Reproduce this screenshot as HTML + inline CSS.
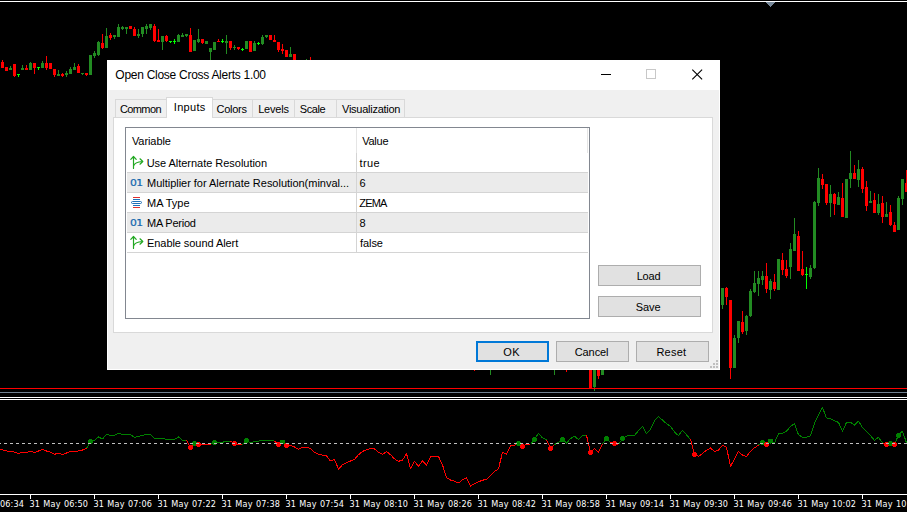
<!DOCTYPE html>
<html><head><meta charset="utf-8"><title>Open Close Cross Alerts 1.00</title>
<style>
html,body{margin:0;padding:0;background:#000;}
body{width:907px;height:512px;overflow:hidden;position:relative;font-family:"Liberation Sans", sans-serif;}
#chart{position:absolute;left:0;top:0;}
.t{position:absolute;white-space:nowrap;}
#dlg{position:absolute;left:107px;top:60px;width:613px;height:310px;background:#f0f0f0;box-shadow:inset 1px 0 0 #fff,inset -1px 0 0 #fff,inset 0 -1px 0 #fff;}
#dlg div{position:absolute;box-sizing:border-box;}
.btn{background:#e1e1e1;border:1px solid #adadad;}
.d01{left:23px;font-family:"DejaVu Sans",sans-serif;font-size:9px;line-height:12px;letter-spacing:-0.5px;color:#1467ae;-webkit-text-stroke:0.2px #1467ae;transform:scaleX(1.2);transform-origin:0 0;}
.ax{top:499px;color:#fff;font-family:"DejaVu Sans Condensed","DejaVu Sans",sans-serif;font-stretch:condensed;font-size:9px;line-height:11px;word-spacing:0.4px;letter-spacing:0.2px;}
.tab{background:#f0f0f0;border:1px solid #d9d9d9;border-bottom:none;}
</style></head><body>
<svg id="chart" width="907" height="512" viewBox="0 0 907 512">
<g shape-rendering="crispEdges">
<rect x="0" y="1" width="907" height="1" fill="#fff"/>
<polygon points="765,2 775,2 770,7" fill="#778899"/>
<rect x="2" y="60" width="1" height="8" fill="#ff0000"/><rect x="1" y="62" width="3" height="6" fill="#ff0000"/><rect x="6" y="67" width="1" height="4" fill="#ff0000"/><rect x="5" y="67" width="3" height="4" fill="#ff0000"/><rect x="10" y="66" width="1" height="4" fill="#228b22"/><rect x="9" y="68" width="3" height="2" fill="#228b22"/><rect x="14" y="64" width="1" height="13" fill="#ff0000"/><rect x="13" y="64" width="3" height="12" fill="#ff0000"/><rect x="22" y="65" width="1" height="5" fill="#228b22"/><rect x="21" y="68" width="3" height="2" fill="#228b22"/><rect x="26" y="65" width="1" height="5" fill="#ff0000"/><rect x="25" y="68" width="3" height="2" fill="#ff0000"/><rect x="30" y="62" width="1" height="8" fill="#228b22"/><rect x="29" y="63" width="3" height="7" fill="#228b22"/><rect x="34" y="63" width="1" height="11" fill="#ff0000"/><rect x="33" y="63" width="3" height="5" fill="#ff0000"/><rect x="42" y="61" width="1" height="7" fill="#228b22"/><rect x="41" y="63" width="3" height="5" fill="#228b22"/><rect x="46" y="56" width="1" height="14" fill="#ff0000"/><rect x="45" y="63" width="3" height="5" fill="#ff0000"/><rect x="50" y="63" width="1" height="6" fill="#ff0000"/><rect x="49" y="63" width="3" height="6" fill="#ff0000"/><rect x="54" y="69" width="1" height="8" fill="#ff0000"/><rect x="53" y="69" width="3" height="6" fill="#ff0000"/><rect x="58" y="70" width="1" height="6" fill="#228b22"/><rect x="57" y="74" width="3" height="2" fill="#228b22"/><rect x="62" y="73" width="1" height="4" fill="#ff0000"/><rect x="61" y="74" width="3" height="2" fill="#ff0000"/><rect x="66" y="71" width="1" height="6" fill="#228b22"/><rect x="65" y="73" width="3" height="2" fill="#228b22"/><rect x="70" y="67" width="1" height="7" fill="#228b22"/><rect x="69" y="69" width="3" height="5" fill="#228b22"/><rect x="74" y="63" width="1" height="7" fill="#228b22"/><rect x="73" y="67" width="3" height="3" fill="#228b22"/><rect x="78" y="64" width="1" height="9" fill="#ff0000"/><rect x="77" y="66" width="3" height="7" fill="#ff0000"/><rect x="86" y="73" width="1" height="3" fill="#ff0000"/><rect x="85" y="73" width="3" height="2" fill="#ff0000"/><rect x="90" y="55" width="1" height="20" fill="#228b22"/><rect x="89" y="55" width="3" height="20" fill="#228b22"/><rect x="94" y="51" width="1" height="7" fill="#228b22"/><rect x="93" y="53" width="3" height="3" fill="#228b22"/><rect x="98" y="41" width="1" height="15" fill="#228b22"/><rect x="97" y="42" width="3" height="13" fill="#228b22"/><rect x="102" y="34" width="1" height="15" fill="#ff0000"/><rect x="101" y="43" width="3" height="5" fill="#ff0000"/><rect x="106" y="28" width="1" height="20" fill="#228b22"/><rect x="105" y="36" width="3" height="12" fill="#228b22"/><rect x="110" y="33" width="1" height="7" fill="#ff0000"/><rect x="109" y="35" width="3" height="3" fill="#ff0000"/><rect x="114" y="35" width="1" height="4" fill="#228b22"/><rect x="113" y="35" width="3" height="2" fill="#228b22"/><rect x="118" y="24" width="1" height="13" fill="#228b22"/><rect x="117" y="27" width="3" height="10" fill="#228b22"/><rect x="122" y="26" width="1" height="4" fill="#228b22"/><rect x="121" y="27" width="3" height="2" fill="#228b22"/><rect x="126" y="27" width="1" height="7" fill="#228b22"/><rect x="125" y="27" width="3" height="2" fill="#228b22"/><rect x="130" y="26" width="1" height="3" fill="#ff0000"/><rect x="129" y="26" width="3" height="3" fill="#ff0000"/><rect x="134" y="27" width="1" height="9" fill="#ff0000"/><rect x="133" y="29" width="3" height="7" fill="#ff0000"/><rect x="138" y="29" width="1" height="9" fill="#228b22"/><rect x="137" y="34" width="3" height="2" fill="#228b22"/><rect x="142" y="27" width="1" height="10" fill="#228b22"/><rect x="141" y="27" width="3" height="7" fill="#228b22"/><rect x="146" y="24" width="1" height="10" fill="#228b22"/><rect x="145" y="26" width="3" height="3" fill="#228b22"/><rect x="150" y="24" width="1" height="6" fill="#228b22"/><rect x="149" y="24" width="3" height="4" fill="#228b22"/><rect x="154" y="24" width="1" height="18" fill="#ff0000"/><rect x="153" y="26" width="3" height="15" fill="#ff0000"/><rect x="158" y="29" width="1" height="13" fill="#ff0000"/><rect x="157" y="40" width="3" height="2" fill="#ff0000"/><rect x="162" y="36" width="1" height="14" fill="#228b22"/><rect x="161" y="36" width="3" height="6" fill="#228b22"/><rect x="166" y="35" width="1" height="7" fill="#ff0000"/><rect x="165" y="36" width="3" height="5" fill="#ff0000"/><rect x="178" y="34" width="1" height="8" fill="#228b22"/><rect x="177" y="35" width="3" height="7" fill="#228b22"/><rect x="182" y="33" width="1" height="4" fill="#228b22"/><rect x="181" y="35" width="3" height="2" fill="#228b22"/><rect x="186" y="34" width="1" height="3" fill="#228b22"/><rect x="185" y="34" width="3" height="2" fill="#228b22"/><rect x="190" y="28" width="1" height="24" fill="#ff0000"/><rect x="189" y="35" width="3" height="17" fill="#ff0000"/><rect x="194" y="40" width="1" height="11" fill="#228b22"/><rect x="193" y="40" width="3" height="11" fill="#228b22"/><rect x="198" y="29" width="1" height="14" fill="#228b22"/><rect x="197" y="39" width="3" height="3" fill="#228b22"/><rect x="202" y="39" width="1" height="5" fill="#ff0000"/><rect x="201" y="39" width="3" height="4" fill="#ff0000"/><rect x="206" y="41" width="1" height="3" fill="#228b22"/><rect x="205" y="41" width="3" height="3" fill="#228b22"/><rect x="210" y="48" width="1" height="12" fill="#228b22"/><rect x="209" y="48" width="3" height="4" fill="#228b22"/><rect x="214" y="42" width="1" height="8" fill="#228b22"/><rect x="213" y="42" width="3" height="8" fill="#228b22"/><rect x="226" y="35" width="1" height="19" fill="#228b22"/><rect x="225" y="41" width="3" height="2" fill="#228b22"/><rect x="230" y="41" width="1" height="9" fill="#ff0000"/><rect x="229" y="41" width="3" height="7" fill="#ff0000"/><rect x="238" y="47" width="1" height="3" fill="#ff0000"/><rect x="237" y="47" width="3" height="2" fill="#ff0000"/><rect x="246" y="41" width="1" height="8" fill="#228b22"/><rect x="245" y="41" width="3" height="8" fill="#228b22"/><rect x="250" y="41" width="1" height="11" fill="#ff0000"/><rect x="249" y="41" width="3" height="11" fill="#ff0000"/><rect x="254" y="41" width="1" height="10" fill="#228b22"/><rect x="253" y="43" width="3" height="8" fill="#228b22"/><rect x="262" y="35" width="1" height="10" fill="#228b22"/><rect x="261" y="37" width="3" height="7" fill="#228b22"/><rect x="266" y="35" width="1" height="3" fill="#228b22"/><rect x="265" y="35" width="3" height="2" fill="#228b22"/><rect x="270" y="35" width="1" height="5" fill="#ff0000"/><rect x="269" y="35" width="3" height="5" fill="#ff0000"/><rect x="274" y="35" width="1" height="7" fill="#ff0000"/><rect x="273" y="40" width="3" height="2" fill="#ff0000"/><rect x="278" y="42" width="1" height="10" fill="#ff0000"/><rect x="277" y="42" width="3" height="8" fill="#ff0000"/><rect x="282" y="44" width="1" height="10" fill="#ff0000"/><rect x="281" y="49" width="3" height="2" fill="#ff0000"/><rect x="286" y="50" width="1" height="7" fill="#ff0000"/><rect x="285" y="50" width="3" height="7" fill="#ff0000"/><rect x="290" y="47" width="1" height="10" fill="#228b22"/><rect x="289" y="54" width="3" height="3" fill="#228b22"/><rect x="294" y="54" width="1" height="9" fill="#ff0000"/><rect x="293" y="54" width="3" height="9" fill="#ff0000"/><rect x="306" y="59" width="1" height="4" fill="#228b22"/><rect x="305" y="61" width="3" height="2" fill="#228b22"/><rect x="310" y="57" width="1" height="6" fill="#ff0000"/><rect x="309" y="61" width="3" height="2" fill="#ff0000"/><rect x="474" y="366" width="1" height="5" fill="#ff0000"/><rect x="473" y="366" width="3" height="1" fill="#ff0000"/><rect x="490" y="366" width="1" height="9" fill="#228b22"/><rect x="489" y="366" width="3" height="1" fill="#228b22"/><rect x="554" y="366" width="1" height="9" fill="#228b22"/><rect x="553" y="366" width="3" height="1" fill="#228b22"/><rect x="566" y="366" width="1" height="6" fill="#ff0000"/><rect x="565" y="366" width="3" height="1" fill="#ff0000"/><rect x="590" y="360" width="1" height="29" fill="#ff0000"/><rect x="589" y="360" width="3" height="29" fill="#ff0000"/><rect x="594" y="360" width="1" height="31" fill="#228b22"/><rect x="593" y="360" width="3" height="27" fill="#228b22"/><rect x="598" y="360" width="1" height="19" fill="#ff0000"/><rect x="597" y="360" width="3" height="16" fill="#ff0000"/><rect x="602" y="360" width="1" height="15" fill="#228b22"/><rect x="601" y="360" width="3" height="15" fill="#228b22"/><rect x="722" y="288" width="1" height="21" fill="#228b22"/><rect x="721" y="288" width="3" height="17" fill="#228b22"/><rect x="726" y="287" width="1" height="18" fill="#ff0000"/><rect x="725" y="288" width="3" height="9" fill="#ff0000"/><rect x="730" y="300" width="1" height="79" fill="#ff0000"/><rect x="729" y="300" width="3" height="68" fill="#ff0000"/><rect x="734" y="335" width="1" height="33" fill="#228b22"/><rect x="733" y="338" width="3" height="30" fill="#228b22"/><rect x="738" y="321" width="1" height="22" fill="#228b22"/><rect x="737" y="321" width="3" height="17" fill="#228b22"/><rect x="742" y="311" width="1" height="23" fill="#ff0000"/><rect x="741" y="322" width="3" height="10" fill="#ff0000"/><rect x="746" y="315" width="1" height="20" fill="#228b22"/><rect x="745" y="316" width="3" height="15" fill="#228b22"/><rect x="750" y="289" width="1" height="28" fill="#228b22"/><rect x="749" y="291" width="3" height="25" fill="#228b22"/><rect x="754" y="271" width="1" height="22" fill="#228b22"/><rect x="753" y="283" width="3" height="9" fill="#228b22"/><rect x="758" y="271" width="1" height="25" fill="#228b22"/><rect x="757" y="278" width="3" height="6" fill="#228b22"/><rect x="762" y="271" width="1" height="14" fill="#228b22"/><rect x="761" y="276" width="3" height="4" fill="#228b22"/><rect x="766" y="263" width="1" height="30" fill="#ff0000"/><rect x="765" y="276" width="3" height="13" fill="#ff0000"/><rect x="770" y="279" width="1" height="20" fill="#228b22"/><rect x="769" y="281" width="3" height="9" fill="#228b22"/><rect x="774" y="274" width="1" height="17" fill="#ff0000"/><rect x="773" y="282" width="3" height="7" fill="#ff0000"/><rect x="778" y="259" width="1" height="31" fill="#228b22"/><rect x="777" y="259" width="3" height="31" fill="#228b22"/><rect x="782" y="253" width="1" height="22" fill="#ff0000"/><rect x="781" y="260" width="3" height="10" fill="#ff0000"/><rect x="786" y="260" width="1" height="18" fill="#ff0000"/><rect x="785" y="269" width="3" height="7" fill="#ff0000"/><rect x="790" y="243" width="1" height="36" fill="#228b22"/><rect x="789" y="249" width="3" height="18" fill="#228b22"/><rect x="794" y="218" width="1" height="33" fill="#228b22"/><rect x="793" y="234" width="3" height="17" fill="#228b22"/><rect x="798" y="231" width="1" height="40" fill="#ff0000"/><rect x="797" y="236" width="3" height="35" fill="#ff0000"/><rect x="802" y="251" width="1" height="25" fill="#ff0000"/><rect x="801" y="269" width="3" height="6" fill="#ff0000"/><rect x="810" y="265" width="1" height="14" fill="#228b22"/><rect x="809" y="268" width="3" height="9" fill="#228b22"/><rect x="814" y="201" width="1" height="68" fill="#228b22"/><rect x="813" y="202" width="3" height="66" fill="#228b22"/><rect x="818" y="168" width="1" height="38" fill="#228b22"/><rect x="817" y="178" width="3" height="25" fill="#228b22"/><rect x="822" y="174" width="1" height="15" fill="#ff0000"/><rect x="821" y="179" width="3" height="6" fill="#ff0000"/><rect x="826" y="184" width="1" height="21" fill="#ff0000"/><rect x="825" y="184" width="3" height="19" fill="#ff0000"/><rect x="830" y="185" width="1" height="32" fill="#228b22"/><rect x="829" y="194" width="3" height="9" fill="#228b22"/><rect x="834" y="193" width="1" height="22" fill="#ff0000"/><rect x="833" y="194" width="3" height="10" fill="#ff0000"/><rect x="838" y="192" width="1" height="13" fill="#228b22"/><rect x="837" y="197" width="3" height="8" fill="#228b22"/><rect x="842" y="183" width="1" height="34" fill="#ff0000"/><rect x="841" y="198" width="3" height="19" fill="#ff0000"/><rect x="846" y="179" width="1" height="39" fill="#228b22"/><rect x="845" y="179" width="3" height="39" fill="#228b22"/><rect x="850" y="151" width="1" height="37" fill="#228b22"/><rect x="849" y="173" width="3" height="6" fill="#228b22"/><rect x="854" y="165" width="1" height="14" fill="#ff0000"/><rect x="853" y="173" width="3" height="6" fill="#ff0000"/><rect x="858" y="160" width="1" height="27" fill="#228b22"/><rect x="857" y="169" width="3" height="11" fill="#228b22"/><rect x="862" y="167" width="1" height="26" fill="#ff0000"/><rect x="861" y="169" width="3" height="20" fill="#ff0000"/><rect x="866" y="181" width="1" height="30" fill="#ff0000"/><rect x="865" y="187" width="3" height="19" fill="#ff0000"/><rect x="870" y="191" width="1" height="12" fill="#228b22"/><rect x="869" y="201" width="3" height="2" fill="#228b22"/><rect x="874" y="193" width="1" height="20" fill="#ff0000"/><rect x="873" y="200" width="3" height="13" fill="#ff0000"/><rect x="878" y="194" width="1" height="21" fill="#228b22"/><rect x="877" y="204" width="3" height="9" fill="#228b22"/><rect x="882" y="196" width="1" height="27" fill="#ff0000"/><rect x="881" y="203" width="3" height="14" fill="#ff0000"/><rect x="886" y="202" width="1" height="15" fill="#228b22"/><rect x="885" y="214" width="3" height="3" fill="#228b22"/><rect x="890" y="205" width="1" height="21" fill="#ff0000"/><rect x="889" y="212" width="3" height="13" fill="#ff0000"/><rect x="894" y="222" width="1" height="10" fill="#ff0000"/><rect x="893" y="225" width="3" height="7" fill="#ff0000"/><rect x="898" y="196" width="1" height="34" fill="#228b22"/><rect x="897" y="198" width="3" height="32" fill="#228b22"/><rect x="902" y="179" width="1" height="26" fill="#228b22"/><rect x="901" y="179" width="3" height="20" fill="#228b22"/><rect x="906" y="170" width="1" height="22" fill="#ff0000"/><rect x="905" y="183" width="3" height="9" fill="#ff0000"/><rect x="18" y="74" width="1" height="3" fill="#00ff00"/><rect x="17" y="74" width="3" height="1" fill="#00ff00"/><rect x="38" y="67" width="1" height="3" fill="#00ff00"/><rect x="37" y="67" width="3" height="1" fill="#00ff00"/><rect x="82" y="73" width="1" height="2" fill="#228b22"/><rect x="81" y="73" width="3" height="1" fill="#228b22"/><rect x="170" y="41" width="1" height="2" fill="#00ff00"/><rect x="169" y="41" width="3" height="1" fill="#00ff00"/><rect x="174" y="39" width="1" height="5" fill="#00ff00"/><rect x="173" y="41" width="3" height="1" fill="#00ff00"/><rect x="218" y="39" width="1" height="3" fill="#ff0000"/><rect x="217" y="41" width="3" height="1" fill="#ff0000"/><rect x="222" y="39" width="1" height="4" fill="#00ff00"/><rect x="221" y="41" width="3" height="1" fill="#00ff00"/><rect x="234" y="45" width="1" height="5" fill="#228b22"/><rect x="233" y="47" width="3" height="1" fill="#228b22"/><rect x="242" y="48" width="1" height="3" fill="#00ff00"/><rect x="241" y="49" width="3" height="1" fill="#00ff00"/><rect x="258" y="42" width="1" height="3" fill="#00ff00"/><rect x="257" y="43" width="3" height="1" fill="#00ff00"/><rect x="806" y="267" width="1" height="22" fill="#00ff00"/><rect x="805" y="274" width="3" height="1" fill="#00ff00"/>
<rect x="0" y="388" width="907" height="1" fill="#ff0000"/>
<rect x="0" y="392" width="907" height="1" fill="#708090"/>
<rect x="0" y="397" width="907" height="1" fill="#fff"/>
<rect x="0" y="399" width="907" height="1" fill="#fff"/>
<rect x="0" y="494" width="907" height="1" fill="#fff"/>
<rect x="30" y="494" width="1" height="5" fill="#fff"/><rect x="94" y="494" width="1" height="5" fill="#fff"/><rect x="158" y="494" width="1" height="5" fill="#fff"/><rect x="222" y="494" width="1" height="5" fill="#fff"/><rect x="286" y="494" width="1" height="5" fill="#fff"/><rect x="350" y="494" width="1" height="5" fill="#fff"/><rect x="414" y="494" width="1" height="5" fill="#fff"/><rect x="478" y="494" width="1" height="5" fill="#fff"/><rect x="542" y="494" width="1" height="5" fill="#fff"/><rect x="606" y="494" width="1" height="5" fill="#fff"/><rect x="670" y="494" width="1" height="5" fill="#fff"/><rect x="734" y="494" width="1" height="5" fill="#fff"/><rect x="798" y="494" width="1" height="5" fill="#fff"/><rect x="862" y="494" width="1" height="5" fill="#fff"/>
</g>
<g stroke-linejoin="round" shape-rendering="crispEdges">
<polyline points="-1.5,449.5 2.5,449.8 6.5,451.0 10.5,451.0 14.5,452.2 18.5,453.4 22.5,452.4 26.5,452.4 30.5,451.4 34.5,452.4 38.5,451.0 42.5,449.4 46.5,451.0 50.5,452.2 54.5,454.2 58.5,453.4 62.5,454.4 66.5,453.0 70.5,451.4 74.5,451.4 78.5,451.0 82.5,450.0 86.5,448.4" fill="none" stroke="#ff0000" stroke-width="1"/><polyline points="86.5,448.4 90.5,441.2 94.5,440.2 98.5,437.0 102.5,439.0 106.5,434.5 110.5,435.4 114.5,435.2 118.5,433.2 122.5,434.4 126.5,434.4 130.5,434.4 134.5,437.4 138.5,436.2 142.5,435.5 146.5,434.4 150.5,434.4 154.5,438.2 158.5,438.2 162.5,438.2 166.5,439.3 170.5,439.3 174.5,439.3 178.5,437.0 182.5,440.2 186.5,440.3" fill="none" stroke="#008000" stroke-width="1"/><polyline points="186.5,440.3 190.5,447.3 194.5,443.2 198.5,444.8 202.5,444.5 206.5,444.5 210.5,444.3" fill="none" stroke="#ff0000" stroke-width="1"/><polyline points="210.5,444.3 214.5,442.3 218.5,443.0 222.5,442.3 226.5,441.2 230.5,441.0" fill="none" stroke="#008000" stroke-width="1"/><polyline points="230.5,441.0 234.5,443.2 238.5,444.5 242.5,444.5" fill="none" stroke="#ff0000" stroke-width="1"/><polyline points="242.5,444.5 246.5,440.7 250.5,442.7 254.5,441.5 258.5,441.2 262.5,440.3 266.5,440.3 270.5,440.3 274.5,441.2" fill="none" stroke="#008000" stroke-width="1"/><polyline points="274.5,441.2 278.5,444.5" fill="none" stroke="#ff0000" stroke-width="1"/><polyline points="278.5,444.5 282.5,442.0" fill="none" stroke="#008000" stroke-width="1"/><polyline points="282.5,442.0 286.5,445.6 290.5,445.6 294.5,447.0 298.5,449.4 302.5,447.3 306.5,447.3 310.5,448.4 314.5,452.2 318.5,454.2 322.5,455.2 326.5,455.9 330.5,461.0 334.5,459.4 338.5,469.1 342.5,464.7 346.5,462.7 350.5,461.0 354.5,459.4 358.5,454.7 362.5,451.4 366.5,449.8 370.5,448.6 374.5,449.0 378.5,452.2 382.5,454.4 386.5,451.4 390.5,454.7 394.5,458.9 398.5,461.3 402.5,460.2 406.5,453.6 410.5,468.5 414.5,461.3 418.5,466.3 422.5,461.0 426.5,465.0 430.5,457.0 434.5,456.1 438.5,456.5 442.5,464.8 446.5,477.7 450.5,480.0 454.5,481.3 458.5,483.0 462.5,479.7 466.5,478.0 470.5,486.0 474.5,483.8 478.5,481.8 482.5,480.2 486.5,479.4 490.5,475.5 494.5,471.4 498.5,468.9 502.5,452.3 506.5,454.0 510.5,445.7 514.5,445.2 518.5,443.5 522.5,446.5 526.5,444.0 530.5,444.5" fill="none" stroke="#ff0000" stroke-width="1"/><polyline points="530.5,444.5 534.5,439.5 538.5,433.2 542.5,437.9 546.5,439.9" fill="none" stroke="#008000" stroke-width="1"/><polyline points="546.5,439.9 550.5,448.2 554.5,444.5" fill="none" stroke="#ff0000" stroke-width="1"/><polyline points="554.5,444.5 558.5,442.4 562.5,439.5 566.5,443.0 570.5,438.7 574.5,436.2 578.5,439.5 582.5,435.3 586.5,435.3" fill="none" stroke="#008000" stroke-width="1"/><polyline points="586.5,435.3 590.5,452.6 594.5,448.6 598.5,452.3 602.5,444.0" fill="none" stroke="#ff0000" stroke-width="1"/><polyline points="602.5,444.0 606.5,438.7 610.5,442.3" fill="none" stroke="#008000" stroke-width="1"/><polyline points="610.5,442.3 614.5,443.5 618.5,444.5" fill="none" stroke="#ff0000" stroke-width="1"/><polyline points="618.5,444.5 622.5,438.5 626.5,436.2 630.5,435.3 634.5,435.3 638.5,430.7 642.5,426.2 646.5,433.7 650.5,429.5 654.5,420.7 658.5,416.3 662.5,420.2 666.5,423.7 670.5,426.5 674.5,432.0 678.5,435.7 682.5,430.2 686.5,434.8 690.5,439.5" fill="none" stroke="#008000" stroke-width="1"/><polyline points="690.5,439.5 694.5,454.4 698.5,456.4 702.5,453.5 706.5,450.2 710.5,448.0 714.5,451.4 718.5,450.1 722.5,445.1 726.5,447.3 730.5,466.4 734.5,458.9 738.5,451.4 742.5,455.1 746.5,456.4 750.5,451.4 754.5,447.8 758.5,445.1" fill="none" stroke="#ff0000" stroke-width="1"/><polyline points="758.5,445.1 762.5,442.3" fill="none" stroke="#008000" stroke-width="1"/><polyline points="762.5,442.3 766.5,444.5" fill="none" stroke="#ff0000" stroke-width="1"/><polyline points="766.5,444.5 770.5,441.1 774.5,442.8 778.5,433.7 782.5,433.2 786.5,431.2 790.5,426.5 794.5,423.6 798.5,434.8 802.5,437.3 806.5,437.3 810.5,435.7 814.5,423.2 818.5,414.9 822.5,407.5 826.5,417.9 830.5,418.6 834.5,420.9 838.5,422.4 842.5,431.2 846.5,422.5 850.5,422.4 854.5,425.2 858.5,421.2 862.5,427.4 866.5,431.5 870.5,435.7 874.5,440.3 878.5,437.3 882.5,442.9" fill="none" stroke="#008000" stroke-width="1"/><polyline points="882.5,442.9 886.5,444.3 890.5,443.5 894.5,444.3" fill="none" stroke="#ff0000" stroke-width="1"/><polyline points="894.5,444.3 898.5,435.2 902.5,431.2 906.5,442.9 910.5,443.0" fill="none" stroke="#008000" stroke-width="1"/><circle cx="90.5" cy="441.2" r="2.5" fill="#008000"/><circle cx="190.5" cy="447.3" r="2.5" fill="#ff0000"/><circle cx="194.5" cy="443.2" r="2.5" fill="#008000"/><circle cx="198.5" cy="444.8" r="2.5" fill="#ff0000"/><circle cx="214.5" cy="442.3" r="2.5" fill="#008000"/><circle cx="234.5" cy="443.2" r="2.5" fill="#ff0000"/><circle cx="246.5" cy="440.7" r="2.5" fill="#008000"/><circle cx="278.5" cy="444.5" r="2.5" fill="#ff0000"/><circle cx="282.5" cy="442.0" r="2.5" fill="#008000"/><circle cx="286.5" cy="445.6" r="2.5" fill="#ff0000"/><circle cx="518.5" cy="443.5" r="2.5" fill="#008000"/><circle cx="522.5" cy="446.5" r="2.5" fill="#ff0000"/><circle cx="534.5" cy="439.5" r="2.5" fill="#008000"/><circle cx="550.5" cy="448.2" r="2.5" fill="#ff0000"/><circle cx="562.5" cy="439.5" r="2.5" fill="#008000"/><circle cx="590.5" cy="452.6" r="2.5" fill="#ff0000"/><circle cx="606.5" cy="438.7" r="2.5" fill="#008000"/><circle cx="614.5" cy="443.5" r="2.5" fill="#ff0000"/><circle cx="622.5" cy="438.5" r="2.5" fill="#008000"/><circle cx="694.5" cy="454.4" r="2.5" fill="#ff0000"/><circle cx="762.5" cy="442.3" r="2.5" fill="#008000"/><circle cx="766.5" cy="444.5" r="2.5" fill="#ff0000"/><circle cx="770.5" cy="441.1" r="2.5" fill="#008000"/><circle cx="886.5" cy="444.3" r="2.5" fill="#ff0000"/><circle cx="890.5" cy="443.5" r="2.5" fill="#008000"/><circle cx="894.5" cy="444.3" r="2.5" fill="#ff0000"/><circle cx="898.5" cy="435.2" r="2.5" fill="#008000"/>
</g>
<g shape-rendering="crispEdges"><rect x="-2" y="443" width="3" height="1" fill="#c0c0c0"/><rect x="4" y="443" width="3" height="1" fill="#c0c0c0"/><rect x="10" y="443" width="3" height="1" fill="#c0c0c0"/><rect x="16" y="443" width="3" height="1" fill="#c0c0c0"/><rect x="22" y="443" width="3" height="1" fill="#c0c0c0"/><rect x="28" y="443" width="3" height="1" fill="#c0c0c0"/><rect x="34" y="443" width="3" height="1" fill="#c0c0c0"/><rect x="40" y="443" width="3" height="1" fill="#c0c0c0"/><rect x="46" y="443" width="3" height="1" fill="#c0c0c0"/><rect x="52" y="443" width="3" height="1" fill="#c0c0c0"/><rect x="58" y="443" width="3" height="1" fill="#c0c0c0"/><rect x="64" y="443" width="3" height="1" fill="#c0c0c0"/><rect x="70" y="443" width="3" height="1" fill="#c0c0c0"/><rect x="76" y="443" width="3" height="1" fill="#c0c0c0"/><rect x="82" y="443" width="3" height="1" fill="#c0c0c0"/><rect x="88" y="443" width="3" height="1" fill="#c0c0c0"/><rect x="94" y="443" width="3" height="1" fill="#c0c0c0"/><rect x="100" y="443" width="3" height="1" fill="#c0c0c0"/><rect x="106" y="443" width="3" height="1" fill="#c0c0c0"/><rect x="112" y="443" width="3" height="1" fill="#c0c0c0"/><rect x="118" y="443" width="3" height="1" fill="#c0c0c0"/><rect x="124" y="443" width="3" height="1" fill="#c0c0c0"/><rect x="130" y="443" width="3" height="1" fill="#c0c0c0"/><rect x="136" y="443" width="3" height="1" fill="#c0c0c0"/><rect x="142" y="443" width="3" height="1" fill="#c0c0c0"/><rect x="148" y="443" width="3" height="1" fill="#c0c0c0"/><rect x="154" y="443" width="3" height="1" fill="#c0c0c0"/><rect x="160" y="443" width="3" height="1" fill="#c0c0c0"/><rect x="166" y="443" width="3" height="1" fill="#c0c0c0"/><rect x="172" y="443" width="3" height="1" fill="#c0c0c0"/><rect x="178" y="443" width="3" height="1" fill="#c0c0c0"/><rect x="184" y="443" width="3" height="1" fill="#c0c0c0"/><rect x="190" y="443" width="3" height="1" fill="#c0c0c0"/><rect x="196" y="443" width="3" height="1" fill="#c0c0c0"/><rect x="202" y="443" width="3" height="1" fill="#c0c0c0"/><rect x="208" y="443" width="3" height="1" fill="#c0c0c0"/><rect x="214" y="443" width="3" height="1" fill="#c0c0c0"/><rect x="220" y="443" width="3" height="1" fill="#c0c0c0"/><rect x="226" y="443" width="3" height="1" fill="#c0c0c0"/><rect x="232" y="443" width="3" height="1" fill="#c0c0c0"/><rect x="238" y="443" width="3" height="1" fill="#c0c0c0"/><rect x="244" y="443" width="3" height="1" fill="#c0c0c0"/><rect x="250" y="443" width="3" height="1" fill="#c0c0c0"/><rect x="256" y="443" width="3" height="1" fill="#c0c0c0"/><rect x="262" y="443" width="3" height="1" fill="#c0c0c0"/><rect x="268" y="443" width="3" height="1" fill="#c0c0c0"/><rect x="274" y="443" width="3" height="1" fill="#c0c0c0"/><rect x="280" y="443" width="3" height="1" fill="#c0c0c0"/><rect x="286" y="443" width="3" height="1" fill="#c0c0c0"/><rect x="292" y="443" width="3" height="1" fill="#c0c0c0"/><rect x="298" y="443" width="3" height="1" fill="#c0c0c0"/><rect x="304" y="443" width="3" height="1" fill="#c0c0c0"/><rect x="310" y="443" width="3" height="1" fill="#c0c0c0"/><rect x="316" y="443" width="3" height="1" fill="#c0c0c0"/><rect x="322" y="443" width="3" height="1" fill="#c0c0c0"/><rect x="328" y="443" width="3" height="1" fill="#c0c0c0"/><rect x="334" y="443" width="3" height="1" fill="#c0c0c0"/><rect x="340" y="443" width="3" height="1" fill="#c0c0c0"/><rect x="346" y="443" width="3" height="1" fill="#c0c0c0"/><rect x="352" y="443" width="3" height="1" fill="#c0c0c0"/><rect x="358" y="443" width="3" height="1" fill="#c0c0c0"/><rect x="364" y="443" width="3" height="1" fill="#c0c0c0"/><rect x="370" y="443" width="3" height="1" fill="#c0c0c0"/><rect x="376" y="443" width="3" height="1" fill="#c0c0c0"/><rect x="382" y="443" width="3" height="1" fill="#c0c0c0"/><rect x="388" y="443" width="3" height="1" fill="#c0c0c0"/><rect x="394" y="443" width="3" height="1" fill="#c0c0c0"/><rect x="400" y="443" width="3" height="1" fill="#c0c0c0"/><rect x="406" y="443" width="3" height="1" fill="#c0c0c0"/><rect x="412" y="443" width="3" height="1" fill="#c0c0c0"/><rect x="418" y="443" width="3" height="1" fill="#c0c0c0"/><rect x="424" y="443" width="3" height="1" fill="#c0c0c0"/><rect x="430" y="443" width="3" height="1" fill="#c0c0c0"/><rect x="436" y="443" width="3" height="1" fill="#c0c0c0"/><rect x="442" y="443" width="3" height="1" fill="#c0c0c0"/><rect x="448" y="443" width="3" height="1" fill="#c0c0c0"/><rect x="454" y="443" width="3" height="1" fill="#c0c0c0"/><rect x="460" y="443" width="3" height="1" fill="#c0c0c0"/><rect x="466" y="443" width="3" height="1" fill="#c0c0c0"/><rect x="472" y="443" width="3" height="1" fill="#c0c0c0"/><rect x="478" y="443" width="3" height="1" fill="#c0c0c0"/><rect x="484" y="443" width="3" height="1" fill="#c0c0c0"/><rect x="490" y="443" width="3" height="1" fill="#c0c0c0"/><rect x="496" y="443" width="3" height="1" fill="#c0c0c0"/><rect x="502" y="443" width="3" height="1" fill="#c0c0c0"/><rect x="508" y="443" width="3" height="1" fill="#c0c0c0"/><rect x="514" y="443" width="3" height="1" fill="#c0c0c0"/><rect x="520" y="443" width="3" height="1" fill="#c0c0c0"/><rect x="526" y="443" width="3" height="1" fill="#c0c0c0"/><rect x="532" y="443" width="3" height="1" fill="#c0c0c0"/><rect x="538" y="443" width="3" height="1" fill="#c0c0c0"/><rect x="544" y="443" width="3" height="1" fill="#c0c0c0"/><rect x="550" y="443" width="3" height="1" fill="#c0c0c0"/><rect x="556" y="443" width="3" height="1" fill="#c0c0c0"/><rect x="562" y="443" width="3" height="1" fill="#c0c0c0"/><rect x="568" y="443" width="3" height="1" fill="#c0c0c0"/><rect x="574" y="443" width="3" height="1" fill="#c0c0c0"/><rect x="580" y="443" width="3" height="1" fill="#c0c0c0"/><rect x="586" y="443" width="3" height="1" fill="#c0c0c0"/><rect x="592" y="443" width="3" height="1" fill="#c0c0c0"/><rect x="598" y="443" width="3" height="1" fill="#c0c0c0"/><rect x="604" y="443" width="3" height="1" fill="#c0c0c0"/><rect x="610" y="443" width="3" height="1" fill="#c0c0c0"/><rect x="616" y="443" width="3" height="1" fill="#c0c0c0"/><rect x="622" y="443" width="3" height="1" fill="#c0c0c0"/><rect x="628" y="443" width="3" height="1" fill="#c0c0c0"/><rect x="634" y="443" width="3" height="1" fill="#c0c0c0"/><rect x="640" y="443" width="3" height="1" fill="#c0c0c0"/><rect x="646" y="443" width="3" height="1" fill="#c0c0c0"/><rect x="652" y="443" width="3" height="1" fill="#c0c0c0"/><rect x="658" y="443" width="3" height="1" fill="#c0c0c0"/><rect x="664" y="443" width="3" height="1" fill="#c0c0c0"/><rect x="670" y="443" width="3" height="1" fill="#c0c0c0"/><rect x="676" y="443" width="3" height="1" fill="#c0c0c0"/><rect x="682" y="443" width="3" height="1" fill="#c0c0c0"/><rect x="688" y="443" width="3" height="1" fill="#c0c0c0"/><rect x="694" y="443" width="3" height="1" fill="#c0c0c0"/><rect x="700" y="443" width="3" height="1" fill="#c0c0c0"/><rect x="706" y="443" width="3" height="1" fill="#c0c0c0"/><rect x="712" y="443" width="3" height="1" fill="#c0c0c0"/><rect x="718" y="443" width="3" height="1" fill="#c0c0c0"/><rect x="724" y="443" width="3" height="1" fill="#c0c0c0"/><rect x="730" y="443" width="3" height="1" fill="#c0c0c0"/><rect x="736" y="443" width="3" height="1" fill="#c0c0c0"/><rect x="742" y="443" width="3" height="1" fill="#c0c0c0"/><rect x="748" y="443" width="3" height="1" fill="#c0c0c0"/><rect x="754" y="443" width="3" height="1" fill="#c0c0c0"/><rect x="760" y="443" width="3" height="1" fill="#c0c0c0"/><rect x="766" y="443" width="3" height="1" fill="#c0c0c0"/><rect x="772" y="443" width="3" height="1" fill="#c0c0c0"/><rect x="778" y="443" width="3" height="1" fill="#c0c0c0"/><rect x="784" y="443" width="3" height="1" fill="#c0c0c0"/><rect x="790" y="443" width="3" height="1" fill="#c0c0c0"/><rect x="796" y="443" width="3" height="1" fill="#c0c0c0"/><rect x="802" y="443" width="3" height="1" fill="#c0c0c0"/><rect x="808" y="443" width="3" height="1" fill="#c0c0c0"/><rect x="814" y="443" width="3" height="1" fill="#c0c0c0"/><rect x="820" y="443" width="3" height="1" fill="#c0c0c0"/><rect x="826" y="443" width="3" height="1" fill="#c0c0c0"/><rect x="832" y="443" width="3" height="1" fill="#c0c0c0"/><rect x="838" y="443" width="3" height="1" fill="#c0c0c0"/><rect x="844" y="443" width="3" height="1" fill="#c0c0c0"/><rect x="850" y="443" width="3" height="1" fill="#c0c0c0"/><rect x="856" y="443" width="3" height="1" fill="#c0c0c0"/><rect x="862" y="443" width="3" height="1" fill="#c0c0c0"/><rect x="868" y="443" width="3" height="1" fill="#c0c0c0"/><rect x="874" y="443" width="3" height="1" fill="#c0c0c0"/><rect x="880" y="443" width="3" height="1" fill="#c0c0c0"/><rect x="886" y="443" width="3" height="1" fill="#c0c0c0"/><rect x="892" y="443" width="3" height="1" fill="#c0c0c0"/><rect x="898" y="443" width="3" height="1" fill="#c0c0c0"/><rect x="904" y="443" width="3" height="1" fill="#c0c0c0"/></g>
</svg>
<span class="t ax" style="left:-34.5px">31 May 06:34</span>
<span class="t ax" style="left:29.5px">31 May 06:50</span>
<span class="t ax" style="left:93.5px">31 May 07:06</span>
<span class="t ax" style="left:157.5px">31 May 07:22</span>
<span class="t ax" style="left:221.5px">31 May 07:38</span>
<span class="t ax" style="left:285.5px">31 May 07:54</span>
<span class="t ax" style="left:349.5px">31 May 08:10</span>
<span class="t ax" style="left:413.5px">31 May 08:26</span>
<span class="t ax" style="left:477.5px">31 May 08:42</span>
<span class="t ax" style="left:541.5px">31 May 08:58</span>
<span class="t ax" style="left:605.5px">31 May 09:14</span>
<span class="t ax" style="left:669.5px">31 May 09:30</span>
<span class="t ax" style="left:733.5px">31 May 09:46</span>
<span class="t ax" style="left:797.5px">31 May 10:02</span>
<span class="t ax" style="left:861.5px">31 May 10:18</span>
<div id="dlg">
<div style="left:0;top:0;width:613px;height:30px;background:#fff"></div>
<!-- caption buttons -->
<svg style="position:absolute;left:480px;top:0" width="133" height="30" viewBox="0 0 133 30">
<rect x="14" y="14" width="10" height="1" fill="#000" shape-rendering="crispEdges"/>
<rect x="59.5" y="9.5" width="9" height="9" fill="none" stroke="#c8c8c8" stroke-width="1"/>
<path d="M105.3 9.6 L115.1 19.4 M115.1 9.6 L105.3 19.4" stroke="#000" stroke-width="1.1" fill="none"/>
</svg>
<!-- tab panel -->
<div style="left:6px;top:57px;width:600px;height:216px;background:#fff;border:1px solid #d9d9d9"></div>
<!-- tabs -->
<div class="tab" style="left:8px;top:39px;width:52px;height:18px"></div>
<div class="tab" style="left:105px;top:39px;width:41px;height:18px"></div>
<div class="tab" style="left:145px;top:39px;width:43px;height:18px"></div>
<div class="tab" style="left:187px;top:39px;width:43px;height:18px"></div>
<div class="tab" style="left:229px;top:39px;width:69px;height:18px"></div>
<div class="tab" style="left:59px;top:37px;width:47px;height:21px;background:#fff"></div>
<!-- table -->
<div style="left:18px;top:67px;width:465px;height:192px;background:#fff;border:1px solid #828790"></div>
<div style="left:249px;top:68px;width:1px;height:25px;background:#e5e5e5"></div>
<div style="left:480px;top:68px;width:1px;height:25px;background:#e5e5e5"></div>
<div style="left:20px;top:113px;width:461px;height:19px;background:#ebebeb"></div>
<div style="left:20px;top:153px;width:461px;height:19px;background:#ebebeb"></div>
<div style="left:20px;top:112px;width:461px;height:1px;background:#d4d4d4"></div>
<div style="left:20px;top:132px;width:461px;height:1px;background:#d4d4d4"></div>
<div style="left:20px;top:152px;width:461px;height:1px;background:#d4d4d4"></div>
<div style="left:20px;top:172px;width:461px;height:1px;background:#d4d4d4"></div>
<div style="left:20px;top:192px;width:461px;height:1px;background:#d4d4d4"></div>
<div style="left:249px;top:93px;width:1px;height:100px;background:#d4d4d4"></div>
<!-- buttons -->
<div class="btn" style="left:491px;top:205px;width:103px;height:21px"></div>
<div class="btn" style="left:491px;top:236px;width:103px;height:21px"></div>
<div class="btn" style="left:369px;top:281px;width:73px;height:21px;border:2px solid #0078d7"></div>
<div class="btn" style="left:449px;top:281px;width:73px;height:21px"></div>
<div class="btn" style="left:529px;top:281px;width:73px;height:21px"></div>
<!-- icons -->
<svg style="position:absolute;left:20px;top:93px" width="20" height="100" viewBox="0 0 20 100">
<g fill="none" stroke="#22a822" stroke-width="1.2" stroke-linecap="round" stroke-linejoin="round">
<path d="M6.5 15.5 V3.5 M3.8 6.3 L6.5 3.5 L9.2 6.3 M6.5 13.2 C7.3 10.4 10.2 8.8 15.5 8.5 M13 5.8 L15.8 8.5 L13 11.2"/>
<path d="M6.5 95.5 V83.5 M3.8 86.3 L6.5 83.5 L9.2 86.3 M6.5 93.2 C7.3 90.4 10.2 88.8 15.5 88.5 M13 85.8 L15.8 88.5 L13 91.2"/>
</g>
<g shape-rendering="crispEdges">
<rect x="6" y="44" width="7" height="1" fill="#e03030"/>
<rect x="6" y="46" width="7" height="1" fill="#2070b8"/>
<rect x="6" y="52" width="7" height="1" fill="#2070b8"/>
<rect x="6" y="54" width="7" height="1" fill="#e03030"/>
</g>
<rect x="4.5" y="48.5" width="10" height="2" rx="1" ry="1" fill="#fff" stroke="#2070b8" stroke-width="1"/>
</svg>
<span class="t d01" style="top:117px">01</span>
<span class="t d01" style="top:157px">01</span>
<!-- grip -->
<svg style="position:absolute;left:599px;top:297px" width="13" height="12" viewBox="0 0 13 12" shape-rendering="crispEdges">
<g fill="#bfbfbf"><rect x="10" y="3" width="2" height="2"/><rect x="7" y="6" width="2" height="2"/><rect x="10" y="6" width="2" height="2"/><rect x="4" y="9" width="2" height="2"/><rect x="7" y="9" width="2" height="2"/><rect x="10" y="9" width="2" height="2"/></g>
</svg>
</div>
<div id="dtext" style="position:absolute;left:0;top:0">
<span class="t" style="left:115.36px;top:68px;font-size:12px;line-height:14px;letter-spacing:-0.275px;color:#000">Open Close Cross Alerts 1.00</span>
<span class="t" style="left:119.93px;top:103px;font-size:11px;line-height:13px;letter-spacing:-0.599px;color:#000">Common</span>
<span class="t" style="left:173.83px;top:101px;font-size:11px;line-height:13px;letter-spacing:0.292px;color:#000">Inputs</span>
<span class="t" style="left:216.43px;top:103px;font-size:11px;line-height:13px;letter-spacing:-0.233px;color:#000">Colors</span>
<span class="t" style="left:258.13px;top:103px;font-size:11px;line-height:13px;letter-spacing:-0.193px;color:#000">Levels</span>
<span class="t" style="left:299.83px;top:103px;font-size:11px;line-height:13px;letter-spacing:-0.425px;color:#000">Scale</span>
<span class="t" style="left:342.03px;top:103px;font-size:11px;line-height:13px;letter-spacing:-0.261px;color:#000">Visualization</span>
<span class="t" style="left:131.93px;top:135px;font-size:11px;line-height:13px;letter-spacing:-0.074px;color:#000">Variable</span>
<span class="t" style="left:362.13px;top:135px;font-size:11px;line-height:13px;letter-spacing:-0.200px;color:#000">Value</span>
<span class="t" style="left:146.63px;top:157px;font-size:11px;line-height:13px;letter-spacing:-0.028px;color:#000">Use Alternate Resolution</span>
<span class="t" style="left:359.43px;top:157px;font-size:11px;line-height:13px;letter-spacing:0.420px;color:#000">true</span>
<span class="t" style="left:147.03px;top:177px;font-size:11px;line-height:13px;letter-spacing:-0.022px;color:#000">Multiplier for Alernate Resolution(minval...</span>
<span class="t" style="left:359.53px;top:177px;font-size:11px;line-height:13px;letter-spacing:0.000px;color:#000">6</span>
<span class="t" style="left:147.03px;top:197px;font-size:11px;line-height:13px;letter-spacing:-0.013px;color:#000">MA Type</span>
<span class="t" style="left:359.23px;top:197px;font-size:11px;line-height:13px;letter-spacing:-0.800px;color:#000">ZEMA</span>
<span class="t" style="left:147.03px;top:217px;font-size:11px;line-height:13px;letter-spacing:-0.228px;color:#000">MA Period</span>
<span class="t" style="left:359.53px;top:217px;font-size:11px;line-height:13px;letter-spacing:0.000px;color:#000">8</span>
<span class="t" style="left:147.03px;top:237px;font-size:11px;line-height:13px;letter-spacing:-0.066px;color:#000">Enable sound Alert</span>
<span class="t" style="left:360.03px;top:237px;font-size:11px;line-height:13px;letter-spacing:-0.080px;color:#000">false</span>
<span class="t" style="left:636.63px;top:270px;font-size:11px;line-height:13px;letter-spacing:-0.185px;color:#000">Load</span>
<span class="t" style="left:635.83px;top:301px;font-size:11px;line-height:13px;letter-spacing:-0.083px;color:#000">Save</span>
<span class="t" style="left:503.23px;top:346px;font-size:11px;line-height:13px;letter-spacing:0.424px;color:#000">OK</span>
<span class="t" style="left:574.73px;top:346px;font-size:11px;line-height:13px;letter-spacing:-0.084px;color:#000">Cancel</span>
<span class="t" style="left:656.43px;top:346px;font-size:11px;line-height:13px;letter-spacing:0.245px;color:#000">Reset</span>
</div>
</body></html>
